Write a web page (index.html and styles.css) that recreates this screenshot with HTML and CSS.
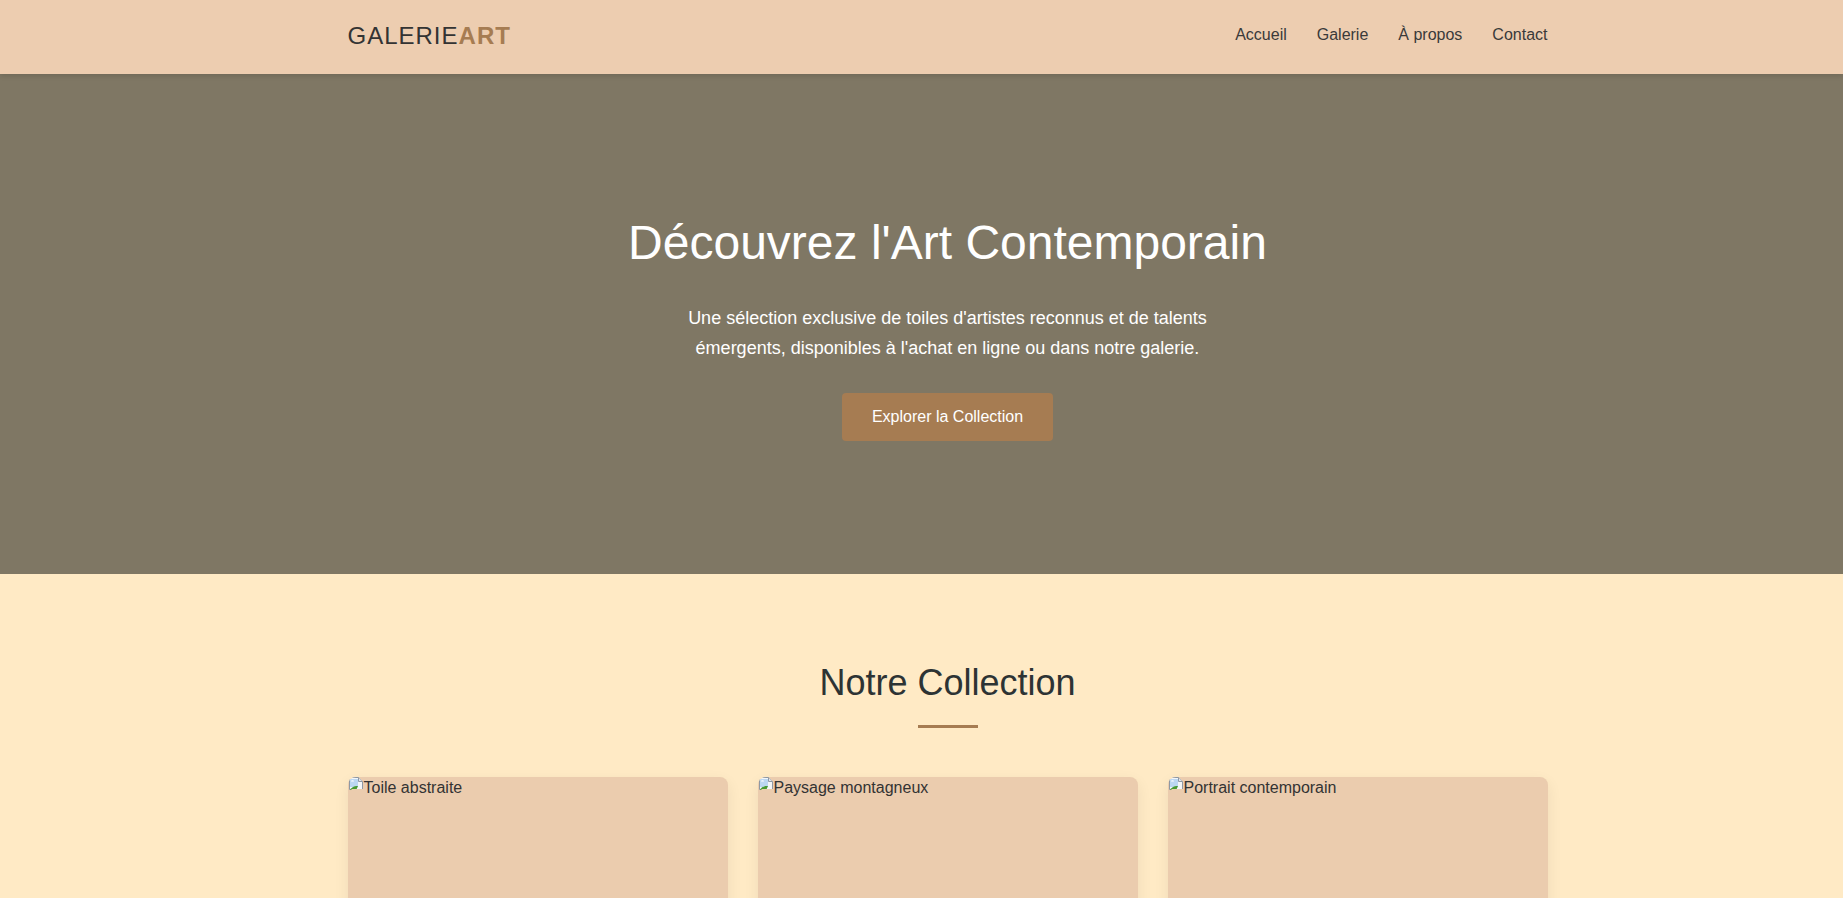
FILE: index.html
```html
<!DOCTYPE html>
<html lang="fr">
<head>
<meta charset="utf-8">
<title>GalerieArt</title>
<link rel="stylesheet" href="styles.css">
</head>
<body>
<header class="site-header">
  <div class="container header-inner">
    <a class="logo" href="#">GALERIE<span class="logo-accent">ART</span></a>
    <nav class="nav">
      <a href="#">Accueil</a>
      <a href="#">Galerie</a>
      <a href="#">À propos</a>
      <a href="#">Contact</a>
    </nav>
  </div>
</header>

<section class="hero">
  <div class="container hero-inner">
    <h1 class="hero-title">Découvrez l'Art Contemporain</h1>
    <p class="hero-text">Une sélection exclusive de toiles d'artistes reconnus et de talents émergents, disponibles à l'achat en ligne ou dans notre galerie.</p>
    <a class="btn" href="#">Explorer la Collection</a>
  </div>
</section>

<section class="collection">
  <div class="container">
    <h2 class="section-title">Notre Collection</h2>
    <div class="divider"></div>
    <div class="grid">
      <article class="card">
        <div class="card-img">
          <svg class="broken" width="16" height="16" viewBox="0 0 16 16"><path d="M1.5 0.5h9l4 4v8h-13z" fill="#f4f6f8" stroke="#8f98a3"/><path d="M10.5 0.5v4h4" fill="#e3e7eb" stroke="#8f98a3"/><path d="M2 2h8v8H2z" fill="#bcd7f2"/><path d="M3 4.5a1.5 1.2 0 0 1 3 0z" fill="#fff"/><path d="M2 13c2-3.5 5-4.5 8-4l-2 4.5z" fill="#4a9a32"/><path d="M0 16l4-4h12v4z" fill="#ebccae"/></svg><span class="alt">Toile abstraite</span>
        </div>
        <div class="card-body"><h3>Harmonie en Bleu</h3><p>Marie Lefèvre</p></div>
      </article>
      <article class="card">
        <div class="card-img">
          <svg class="broken" width="16" height="16" viewBox="0 0 16 16"><path d="M1.5 0.5h9l4 4v8h-13z" fill="#f4f6f8" stroke="#8f98a3"/><path d="M10.5 0.5v4h4" fill="#e3e7eb" stroke="#8f98a3"/><path d="M2 2h8v8H2z" fill="#bcd7f2"/><path d="M3 4.5a1.5 1.2 0 0 1 3 0z" fill="#fff"/><path d="M2 13c2-3.5 5-4.5 8-4l-2 4.5z" fill="#4a9a32"/><path d="M0 16l4-4h12v4z" fill="#ebccae"/></svg><span class="alt">Paysage montagneux</span>
        </div>
        <div class="card-body"><h3>Sommets Éternels</h3><p>Jean Dupont</p></div>
      </article>
      <article class="card">
        <div class="card-img">
          <svg class="broken" width="16" height="16" viewBox="0 0 16 16"><path d="M1.5 0.5h9l4 4v8h-13z" fill="#f4f6f8" stroke="#8f98a3"/><path d="M10.5 0.5v4h4" fill="#e3e7eb" stroke="#8f98a3"/><path d="M2 2h8v8H2z" fill="#bcd7f2"/><path d="M3 4.5a1.5 1.2 0 0 1 3 0z" fill="#fff"/><path d="M2 13c2-3.5 5-4.5 8-4l-2 4.5z" fill="#4a9a32"/><path d="M0 16l4-4h12v4z" fill="#ebccae"/></svg><span class="alt">Portrait contemporain</span>
        </div>
        <div class="card-body"><h3>Regard Intérieur</h3><p>Sophie Martin</p></div>
      </article>
    </div>
  </div>
</section>
</body>
</html>
```

FILE: styles.css
```css
* { box-sizing: border-box; }

html, body {
  margin: 0;
  padding: 0;
}

body {
  font-family: "Liberation Sans", Arial, sans-serif;
  color: #333;
  background: #ffeac5;
}

a { text-decoration: none; color: inherit; }

.container {
  max-width: 1200px;
  margin: 0 auto;
}

.site-header {
  background: #edcdb0;
  height: 74px;
  padding-left: 52px;
  box-shadow: 0 2px 5px rgba(0, 0, 0, 0.12);
  position: relative;
  z-index: 2;
}

.header-inner {
  height: 100%;
  display: flex;
  align-items: center;
  justify-content: space-between;
}

.logo {
  font-size: 24px;
  letter-spacing: 1px;
  color: #333;
  margin-top: -2px;
}

.logo-accent {
  font-weight: bold;
  color: #a67c52;
}

.nav {
  display: flex;
  gap: 30px;
  margin-top: -5px;
}

.nav a {
  font-size: 16px;
  color: #3a3a3a;
}

.hero {
  background: #7f7764;
  height: 500px;
  padding: 141px 0 0 52px;
}

.hero-inner {
  display: flex;
  flex-direction: column;
  align-items: center;
  text-align: center;
}

.hero-title {
  margin: 0 0 34px;
  font-size: 48px;
  font-weight: normal;
  line-height: normal;
  color: #fff;
}

.hero-text {
  margin: 0 0 30px;
  max-width: 600px;
  font-size: 18px;
  line-height: 29.5px;
  color: #fff;
}

.btn {
  display: inline-block;
  background: #a67c52;
  color: #fff;
  font-size: 16px;
  line-height: 18px;
  padding: 15px 30px;
  border-radius: 4px;
}

.collection {
  padding: 88px 0 80px 52px;
}

.section-title {
  margin: 0;
  text-align: center;
  font-size: 36px;
  font-weight: normal;
  line-height: normal;
  color: #2d3334;
}

.divider {
  width: 60px;
  height: 3px;
  background: #a67c52;
  margin: 21px auto 49px;
}

.grid {
  display: grid;
  grid-template-columns: repeat(3, 1fr);
  gap: 30px;
}

.card {
  background: #ebccae;
  border-radius: 8px;
  overflow: hidden;
  box-shadow: 0 5px 15px rgba(0, 0, 0, 0.07);
}

.card-img {
  height: 300px;
  display: flex;
  align-items: flex-start;
  font-size: 16px;
  color: #333;
  line-height: 18px;
}

.broken {
  flex: none;
}

.alt {
  padding-top: 2px;
}

.card-body {
  padding: 20px;
}

.card-body h3 {
  margin: 0 0 8px;
  font-size: 20px;
  font-weight: normal;
}

.card-body p {
  margin: 0;
  color: #666;
}
```
